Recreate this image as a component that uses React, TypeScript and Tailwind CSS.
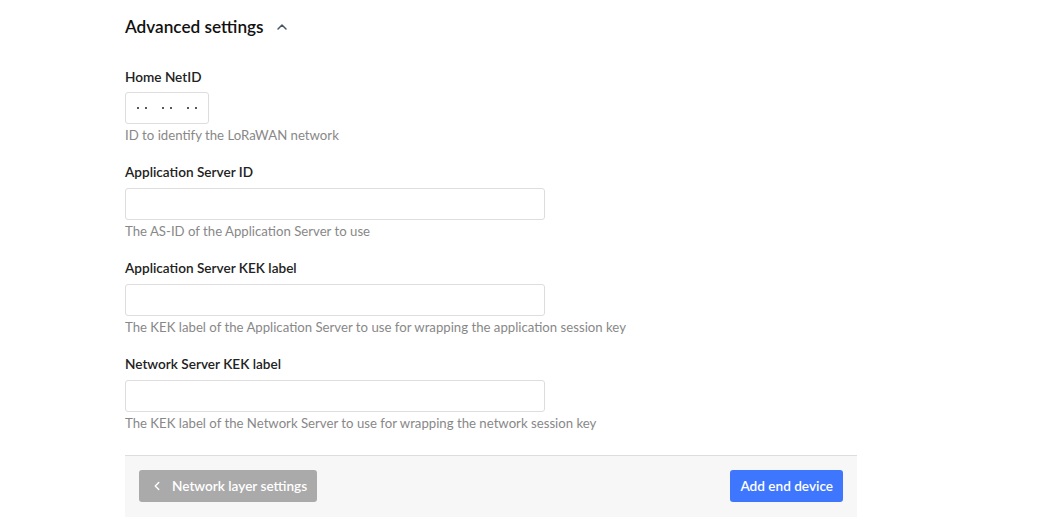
import { ChevronLeft, ChevronUp } from "lucide-react";

const fields = [
	{ label: "Application Server ID", help: "The AS-ID of the Application Server to use" },
	{ label: "Application Server KEK label", help: "The KEK label of the Application Server to use for wrapping the application session key" },
	{ label: "Network Server KEK label", help: "The KEK label of the Network Server to use for wrapping the network session key" },
];

// Pair of placeholder dots in the NetID input
const DotPair = () => (
	<div className="flex gap-[6px]">
		<span className="w-[2px] h-[2px] rounded-full bg-[#222]" />
		<span className="w-[2px] h-[2px] rounded-full bg-[#222]" />
	</div>
);

export default function App() {
	return (
		<div className="w-[1045px] h-[525px] bg-white text-[#222] font-['Lato',sans-serif] overflow-hidden">
			<div className="ml-[125px] w-[732px] pt-[14px]">

				{/* Section header */}
				<div className="flex items-center gap-[10px] h-[26px]">
					<h2 className="text-[17.2px] font-semibold text-[#111]">Advanced settings</h2>
					<ChevronUp className="w-[16px] h-[16px] text-[#44546a]" strokeWidth={2.25} />
				</div>

				{/* Home NetID */}
				<div className="mt-[28px]">
					<div className="text-[13.6px] font-semibold leading-[18px]">Home NetID</div>
					<div className="mt-[6px] w-[84px] h-[32px] border border-[#ddd] rounded-[3px] flex items-center pl-[11px] gap-[15px]">
						<DotPair /><DotPair /><DotPair />
					</div>
					<div className="mt-[2px] text-[13.2px] text-[#888] leading-[18px]">ID to identify the LoRaWAN network</div>
				</div>

				{/* Server fields */}
				{fields.map(f => (
					<div key={f.label} className="mt-[19px]">
						<div className="text-[13.6px] font-semibold leading-[18px]">{f.label}</div>
						<div className="mt-[7px] w-[420px] h-[32px] border border-[#ddd] rounded-[3px]" />
						<div className="mt-[2px] text-[13.2px] text-[#888] leading-[18px]">{f.help}</div>
					</div>
				))}

				{/* Footer */}
				<div className="mt-[23px] border-t border-[#ddd] bg-[#f7f7f7] h-[62px] flex items-start justify-between px-[14px] pt-[14px]">
					<button className="h-[32px] pl-[11px] pr-[10px] flex items-center gap-[8px] rounded-[3px] bg-[#aaa] text-white text-[13.6px] font-semibold">
						<ChevronLeft className="w-[14px] h-[14px]" strokeWidth={2.5} />
						Network layer settings
					</button>
					<button className="h-[32px] px-[10px] rounded-[3px] bg-[#3e76fd] text-white text-[13.6px] font-semibold">
						Add end device
					</button>
				</div>

			</div>
		</div>
	);
}
